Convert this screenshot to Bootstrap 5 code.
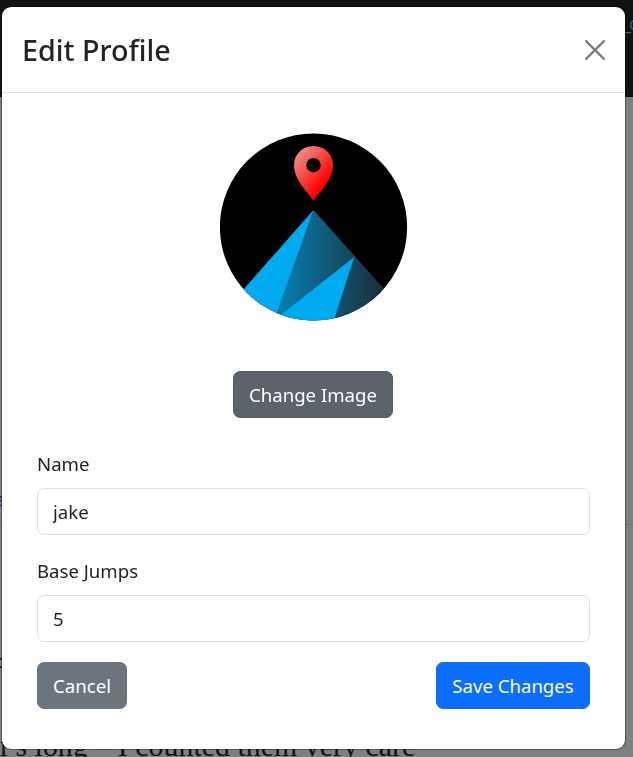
<!DOCTYPE html>
<html lang="en">
<head>
<meta charset="utf-8">
<meta name="viewport" content="width=device-width, initial-scale=1">
<title>Edit Profile</title>
<link href="https://cdn.jsdelivr.net/npm/bootstrap@5.3.0/dist/css/bootstrap.min.css" rel="stylesheet">
<style>
body{font-family:"Segoe UI","Noto Sans",sans-serif;font-size:18.6px;line-height:30px;height:757px;overflow:hidden}
.site-bar{height:97px;background:#212529}
.site-search{color:#bbb;line-height:1;font-size:18px;padding-top:14px;width:10px;white-space:nowrap;letter-spacing:-2px}
.site-search span{color:#6ea8fe}
.page-links{height:428px;padding-top:387px;border-bottom:1px solid #dee2e6;color:#0d6efd;text-indent:-6px}
.page-note{height:206px;padding-top:121px;line-height:30px;text-indent:-5px}
.page-quote{font-family:"Liberation Serif",serif;font-size:29.8px;line-height:30px;height:26px;white-space:nowrap;letter-spacing:.06px}
.modal-backdrop{--bs-backdrop-opacity:.5}
.modal{overflow:hidden}
.modal-dialog{max-width:none;margin:6px 7px 0 1px}
.modal-content{height:744px;border-radius:10px;border-color:rgba(0,0,0,.3)}
.modal-header{height:86px;padding:0 20px}
.modal-title{font-size:28.7px;font-weight:500}
.close-btn{width:20px;height:20px;padding:0;margin:0;border:0;background:none;color:#7f7f7f;display:flex}
.modal-body{padding:40px 35px 0}
.avatar{width:188px;height:188px;margin-bottom:50px}
.btn{--bs-btn-font-size:18.6px;--bs-btn-line-height:31px;--bs-btn-padding-y:7px;--bs-btn-padding-x:0;--bs-btn-border-radius:7px;height:47px}
.change-btn{width:160px;--bs-btn-bg:#5c636a;--bs-btn-border-color:#565e64;margin-bottom:31px;margin-right:1px}
.cancel-btn{width:90px}
.save-btn{width:154px}
.form-label{line-height:30px;margin-bottom:9px;display:block}
.form-control{height:47px;font-size:18.6px;padding:7px 15px;border-radius:7px;border-color:#dee2e6}
.field{margin-bottom:21px}
.field+.field{margin-bottom:20px}
</style>
<script src="https://cdn.jsdelivr.net/npm/bootstrap@5.3.0/dist/js/bootstrap.bundle.min.js"></script>
</head>
<body>
<div class="site-bar d-flex justify-content-end"><div class="site-search">_<span>c</span></div></div>
<div class="page-links">e</div>
<div class="page-note">c</div>
<div class="page-quote">r's long – I counted them very care</div>
<div class="modal-backdrop show"></div>
<div class="modal d-block" tabindex="-1">
 <div class="modal-dialog">
  <div class="modal-content">
   <div class="modal-header d-flex align-items-center justify-content-between">
    <h1 class="modal-title">Edit Profile</h1>
    <button type="button" class="close-btn" aria-label="Close"><svg width="20" height="20" viewBox="0 0 20 20" fill="none" stroke="currentColor" stroke-width="2.3" stroke-linecap="round"><path d="M1.1 1.1 18.9 18.9M18.9 1.1 1.1 18.9"/></svg></button>
   </div>
   <div class="modal-body">
    <div class="d-flex flex-column align-items-center">
     <svg class="avatar" viewBox="0 0 188 188" role="img" aria-label="Profile image">
      <defs>
       <clipPath id="disc"><circle cx="93.5" cy="94" r="93.6"/></clipPath>
       <linearGradient id="pin" x1="0" y1="0" x2=".65" y2=".8"><stop offset="0" stop-color="#e8a79d"/><stop offset="1" stop-color="#f00"/></linearGradient>
       <linearGradient id="ridge" gradientUnits="userSpaceOnUse" x1="56" y1="0" x2="164" y2="0"><stop offset="0" stop-color="#0581b4"/><stop offset="1" stop-color="#1c2d38"/></linearGradient>
      </defs>
      <g clip-path="url(#disc)">
       <path fill="#000" d="M0 0H188V188H0z"/>
       <path fill="url(#ridge)" d="M93.5 77 190 185V188H50z"/>
       <path fill="#00aaf0" d="M93.5 77 0 183V190H53z"/>
       <path fill="#00aaf0" d="M134.3 124 50.500 190H113z"/>
      </g>
      <path fill="url(#pin)" fill-rule="evenodd" d="M93.5 13C82 13 74 21.500 74 32.500C74 46 87 59 93.500 67.500C100 59 113 46 113 32.500C113 21.500 105 13 93.500 13zM93.500 25a7.200 7.200 0 1 1 0 14.400a7.200 7.200 0 1 1 0-14.400z"/>
     </svg>
     <button type="button" class="btn btn-secondary change-btn">Change Image</button>
    </div>
    <div class="field"><label class="form-label" for="name">Name</label><input id="name" class="form-control" value="jake"></div>
    <div class="field"><label class="form-label" for="jumps">Base Jumps</label><input id="jumps" class="form-control" value="5"></div>
    <div class="d-flex justify-content-between">
     <button type="button" class="btn btn-secondary cancel-btn">Cancel</button>
     <button type="button" class="btn btn-primary save-btn">Save Changes</button>
    </div>
   </div>
  </div>
 </div>
</div>
</body>
</html>
